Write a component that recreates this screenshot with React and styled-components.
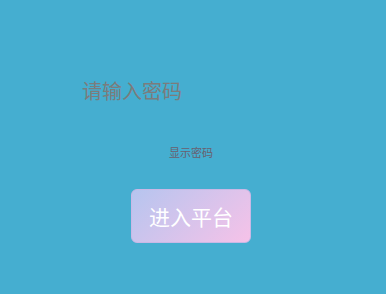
import React from 'react'
import styled, { createGlobalStyle } from 'styled-components'

const GlobalStyle = createGlobalStyle`
  html, body {
    margin: 0;
    padding: 0;
    background: #45aed0;
    font-family: "Noto Sans CJK SC", "Liberation Sans", sans-serif;
  }
`

const Page = styled.div`
  width: 386px;
  height: 294px;
  box-sizing: border-box;
  padding: 75px 4px 0 0;
  display: flex;
  flex-direction: column;
  align-items: center;
`

const PasswordInput = styled.input`
  width: 218px;
  height: 30px;
  padding: 0;
  border: none;
  outline: none;
  background: transparent;
  font-family: "Noto Sans CJK SC", sans-serif;
  font-size: 20px;
  color: #333;
  &::placeholder {
    color: #7c7c7c;
  }
`

const ShowToggle = styled.div`
  margin-top: 39px;
  font-size: 11px;
  color: #6a5f6e;
  cursor: pointer;
`

const EnterButton = styled.button`
  margin-top: 29px;
  width: 120px;
  height: 54px;
  border: 1px solid #c9b8e6;
  border-radius: 6px;
  background: linear-gradient(135deg, #b6c5ef 0%, #f6c2e8 100%);
  color: #fff;
  font-family: "Noto Sans CJK SC", sans-serif;
  font-size: 21px;
  cursor: pointer;
`

export default function App() {
  return (
    <>
      <GlobalStyle />
      <Page>
        <PasswordInput type="password" placeholder="请输入密码" />
        <ShowToggle>显示密码</ShowToggle>
        <EnterButton>进入平台</EnterButton>
      </Page>
    </>
  )
}
